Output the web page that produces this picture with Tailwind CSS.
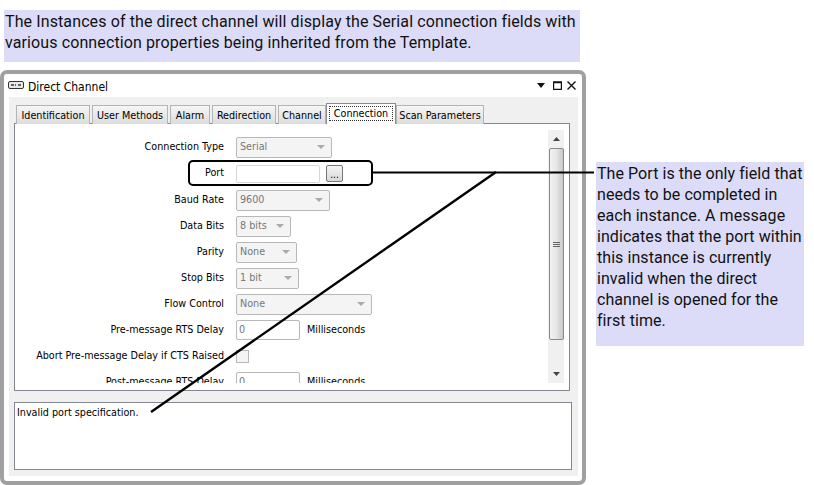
<!DOCTYPE html>
<html lang="en">
<head>
  <meta charset="UTF-8">
  <title>Direct Channel</title>
  <script src="https://cdn.jsdelivr.net/npm/@tailwindcss/browser@4"></script>
</head>
<body class="bg-white">
  <div class="relative w-[814px] h-[485px] overflow-hidden font-['Roboto',sans-serif]">
    <!-- top note -->
    <div class="ml-1 mt-[10px] w-[576px] h-[52px] bg-[#dcdcf8] pl-px pt-[1px] text-[16px] leading-[21px] tracking-[0.11px] text-[#111]">
      The Instances of the direct channel will display the Serial connection fields with<br>various connection properties being inherited from the Template.
    </div>

    <div class="flex items-start mt-2">
      <!-- window -->
      <div class="w-[586px] h-[415px] shrink-0 border-[4px] border-[#a0a0a0] rounded-[7px] bg-white pl-[5px] pr-[4px] flex flex-col font-['DejaVu_Sans',sans-serif] [font-stretch:condensed] text-[10.7px] text-black whitespace-nowrap">
        <div class="h-[23px] shrink-0 flex items-center -ml-[1px] pr-[2px]">
          <svg width="16" height="8" viewBox="0 0 16 8" class="mr-1 -mt-[2px]"><rect x="0.5" y="0.5" width="15" height="7" rx="1.5" fill="#e8e8e8" stroke="#333"/><path d="M3 3h3v2H3zM7 3h1v2H7zM10 3h3v2h-3z" fill="#666"/></svg>
          <span class="text-[12px] pt-[2px]">Direct Channel</span>
          <div class="ml-auto flex items-center gap-[5px]">
            <svg width="8" height="5" viewBox="0 0 8 5" class="mr-[3px]"><path d="M0 0h8L4 5z" fill="#111"/></svg>
            <svg width="9" height="9" viewBox="0 0 9 9"><path d="M.5 1.500h8v7h-8zM0 1h9" fill="none" stroke="#111" stroke-width="1.4"/></svg>
            <svg width="9" height="9" viewBox="0 0 9 9"><path d="M.5.5l8 8M8.500 .5l-8 8" stroke="#111" stroke-width="1.4"/></svg>
          </div>
        </div>

        <div class="flex-1 bg-[#f0f0f0] px-[5px] flex flex-col">
          <!-- tabs -->
          <div class="h-[27px] shrink-0 flex items-end pl-[2px] gap-[2px] -mb-px relative z-10">
            <div class="h-[19px] w-[74px] border border-b-0 border-[#b4b4b4] bg-gradient-to-b from-[#f6f6f6] to-[#dcdcdc] flex items-center justify-center pt-[2px]">Identification</div>
            <div class="h-[19px] w-[76px] border border-b-0 border-[#b4b4b4] bg-gradient-to-b from-[#f6f6f6] to-[#dcdcdc] flex items-center justify-center pt-[2px]">User Methods</div>
            <div class="h-[19px] w-[40px] border border-b-0 border-[#b4b4b4] bg-gradient-to-b from-[#f6f6f6] to-[#dcdcdc] flex items-center justify-center pt-[2px]">Alarm</div>
            <div class="h-[19px] w-[64px] border border-b-0 border-[#b4b4b4] bg-gradient-to-b from-[#f6f6f6] to-[#dcdcdc] flex items-center justify-center pt-[2px]">Redirection</div>
            <div class="h-[19px] w-[48px] border border-b-0 border-[#b4b4b4] bg-gradient-to-b from-[#f6f6f6] to-[#dcdcdc] flex items-center justify-center pt-[2px]">Channel</div>
            <div class="h-[21px] w-[70px] -mx-[2px] border border-b-0 border-[#8c8c8c] bg-white p-[2px] pb-[3px]">
              <div class="h-full border border-dotted border-[#333] flex items-center justify-center pt-px">Connection</div>
            </div>
            <div class="h-[19px] w-[88px] border border-b-0 border-[#b4b4b4] bg-gradient-to-b from-[#f6f6f6] to-[#dcdcdc] flex items-center justify-center pt-[2px]">Scan Parameters</div>
          </div>

          <!-- tab page -->
          <div class="h-[268px] w-[556px] shrink-0 border border-[#828790] bg-white pt-[6px] pl-px flex">
            <div class="w-[532px] h-[253px] overflow-hidden pt-[4px]">
              <div class="h-[26px] flex items-center">
                <div class="w-[208px] text-right mr-[12px]">Connection Type</div>
                <div class="w-[96px] h-[21px] border border-[#b8b8b8] rounded-[2px] bg-[#f4f4f4] text-[#777] flex items-center justify-between pl-[3px] pr-[6px]">Serial<svg width="8" height="4" viewBox="0 0 8 4"><path d="M0 0h8L4 4z" fill="#aaa"/></svg></div>
              </div>
              <div class="h-[27px] flex items-center">
                <div class="w-[208px] text-right mr-[12px]">Port</div>
                <div class="w-[84px] h-[18px] border border-[#d8d8d8] rounded-[2px] bg-white"></div>
                <div class="w-[17px] h-[17px] ml-[6px] border border-[#777] rounded-[2px] bg-gradient-to-b from-[#f4f4f4] to-[#d8d8d8] flex items-end justify-center text-[10px] leading-[13px]">...</div>
              </div>
              <div class="h-[26px] flex items-center">
                <div class="w-[208px] text-right mr-[12px]">Baud Rate</div>
                <div class="w-[94px] h-[21px] border border-[#b8b8b8] rounded-[2px] bg-[#f4f4f4] text-[#777] flex items-center justify-between pl-[3px] pr-[6px]">9600<svg width="8" height="4" viewBox="0 0 8 4"><path d="M0 0h8L4 4z" fill="#aaa"/></svg></div>
              </div>
              <div class="h-[26px] flex items-center">
                <div class="w-[208px] text-right mr-[12px]">Data Bits</div>
                <div class="w-[55px] h-[21px] border border-[#b8b8b8] rounded-[2px] bg-[#f4f4f4] text-[#777] flex items-center justify-between pl-[3px] pr-[6px]">8 bits<svg width="8" height="4" viewBox="0 0 8 4"><path d="M0 0h8L4 4z" fill="#aaa"/></svg></div>
              </div>
              <div class="h-[26px] flex items-center">
                <div class="w-[208px] text-right mr-[12px]">Parity</div>
                <div class="w-[61px] h-[21px] border border-[#b8b8b8] rounded-[2px] bg-[#f4f4f4] text-[#777] flex items-center justify-between pl-[3px] pr-[6px]">None<svg width="8" height="4" viewBox="0 0 8 4"><path d="M0 0h8L4 4z" fill="#aaa"/></svg></div>
              </div>
              <div class="h-[26px] flex items-center">
                <div class="w-[208px] text-right mr-[12px]">Stop Bits</div>
                <div class="w-[63px] h-[21px] border border-[#b8b8b8] rounded-[2px] bg-[#f4f4f4] text-[#777] flex items-center justify-between pl-[3px] pr-[6px]">1 bit<svg width="8" height="4" viewBox="0 0 8 4"><path d="M0 0h8L4 4z" fill="#aaa"/></svg></div>
              </div>
              <div class="h-[26px] flex items-center">
                <div class="w-[208px] text-right mr-[12px]">Flow Control</div>
                <div class="w-[136px] h-[21px] border border-[#b8b8b8] rounded-[2px] bg-[#f4f4f4] text-[#777] flex items-center justify-between pl-[3px] pr-[6px]">None<svg width="8" height="4" viewBox="0 0 8 4"><path d="M0 0h8L4 4z" fill="#aaa"/></svg></div>
              </div>
              <div class="h-[26px] flex items-center">
                <div class="w-[208px] text-right mr-[12px]">Pre-message RTS Delay</div>
                <div class="w-[64px] h-[20px] border border-[#b8b8b8] rounded-[2px] bg-white text-[#777] flex items-center pl-[2px]">0</div>
                <div class="ml-[7px]">Milliseconds</div>
              </div>
              <div class="h-[26px] flex items-center">
                <div class="w-[208px] text-right mr-[12px]">Abort Pre-message Delay if CTS Raised</div>
                <div class="w-[13px] h-[13px] border border-[#b8b8b8] bg-[#f4f4f4]"></div>
              </div>
              <div class="h-[26px] flex items-center">
                <div class="w-[208px] text-right mr-[12px]">Post-message RTS Delay</div>
                <div class="w-[64px] h-[20px] border border-[#b8b8b8] rounded-[2px] bg-white text-[#777] flex items-center pl-[2px]">0</div>
                <div class="ml-[7px]">Milliseconds</div>
              </div>
            </div>
            <!-- scrollbar -->
            <div class="w-[16px] h-[253px] bg-[#f0f0f0] flex flex-col items-center">
              <svg width="7" height="18" viewBox="0 0 7 18" class="shrink-0"><path d="M0 11h7L3.500 7z" fill="#444"/></svg>
              <div class="w-[15px] h-[192px] shrink-0 border border-[#8a8a8a] rounded-[2px] bg-gradient-to-r from-[#f2f2f2] via-[#e6e6e6] to-[#c8c8c8] flex items-center justify-center">
                <svg width="7" height="7" viewBox="0 0 7 7"><path d="M0 1.500h7M0 3.500h7M0 5.500h7" stroke="#666"/></svg>
              </div>
              <svg width="7" height="42" viewBox="0 0 7 42" class="shrink-0"><path d="M0 32h7L3.500 36z" fill="#444"/></svg>
            </div>
          </div>

          <!-- message box -->
          <div class="mt-[11px] h-[68px] w-[558px] shrink-0 border border-[#828790] bg-white px-[2px] py-[2px]">Invalid port specification.</div>
        </div>
        <div class="h-[5px] shrink-0"></div>
      </div>

      <!-- right note -->
      <div class="ml-[10px] mt-[92px] w-[208px] h-[184px] bg-[#dcdcf8] text-[16px] leading-[21px] tracking-[0.06px] text-[#111] pl-[1px] pt-[1px]">
        The Port is the only field that<br>needs to be completed in<br>each instance. A message<br>indicates that the port within<br>this instance is currently<br>invalid when the direct<br>channel is opened for the<br>first time.
      </div>
    </div>

    <!-- callout over the window -->
    <div class="absolute left-[188px] top-[160px] w-[185px] h-[26px] border-2 border-black rounded-[5px]"></div>
    <svg class="absolute left-0 top-0" width="814" height="485" viewBox="0 0 814 485">
      <path d="M372 172.500H594" stroke="#000" stroke-width="2" fill="none"/>
      <path d="M151 412L496 172" stroke="#000" stroke-width="2.400" fill="none"/>
    </svg>
  </div>
</body>
</html>
